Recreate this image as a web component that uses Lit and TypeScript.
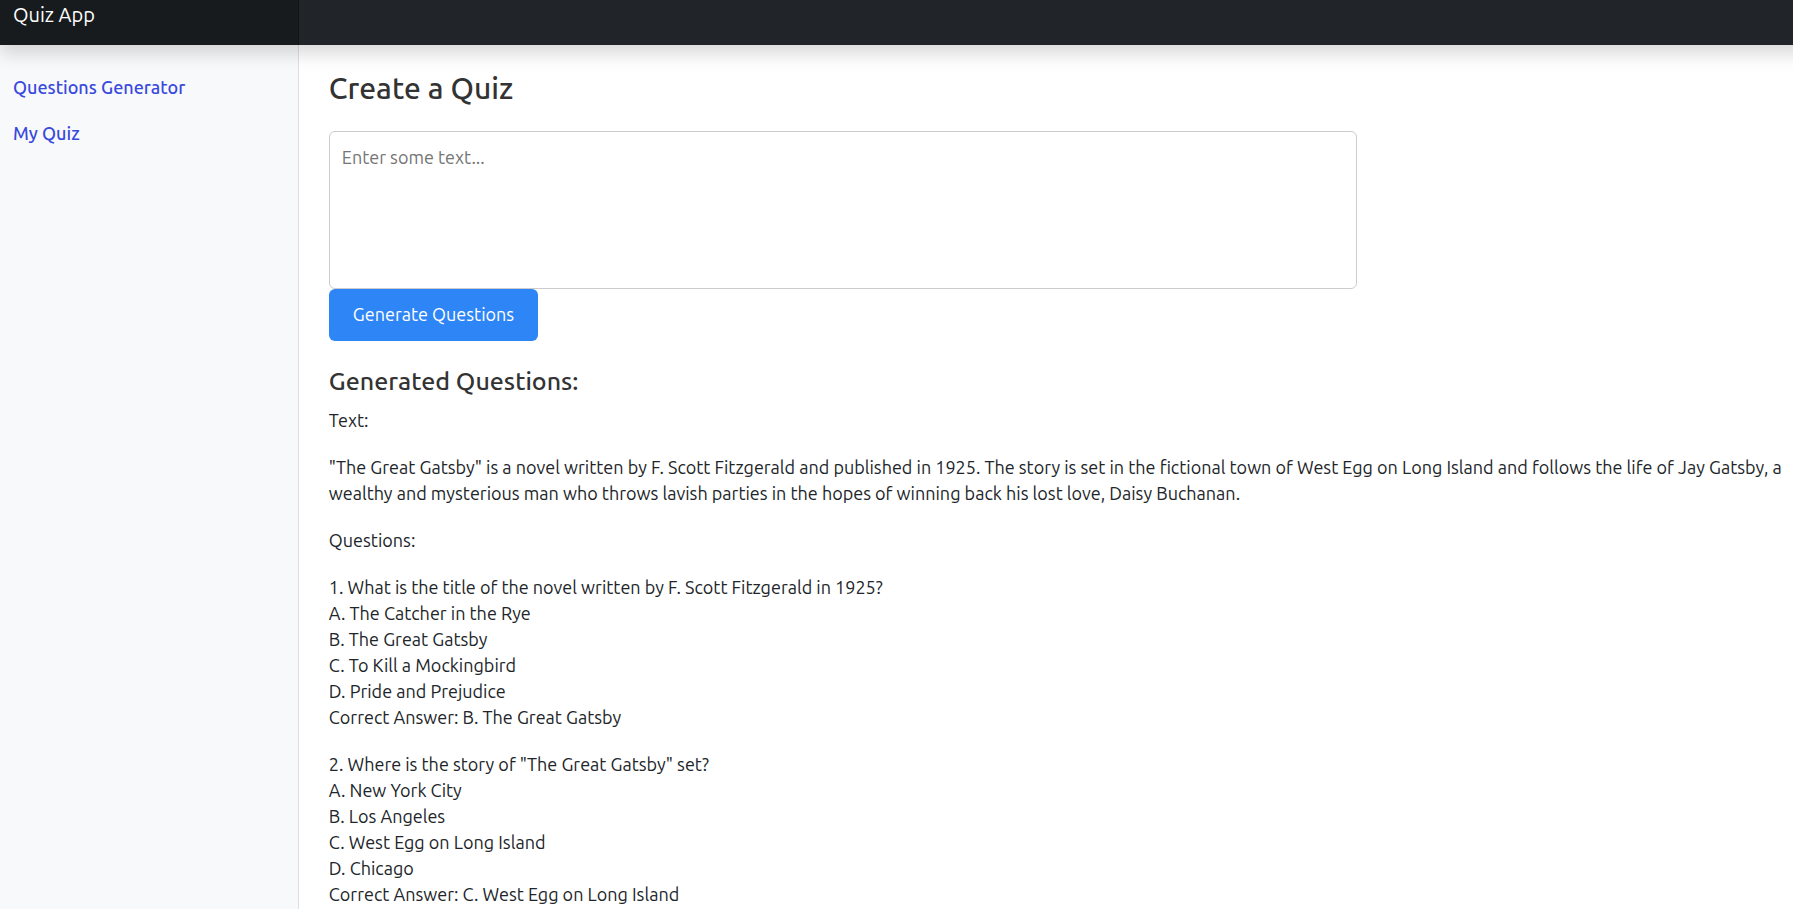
import { LitElement, html, css } from "lit";
import { customElement, property, state } from "lit/decorators.js";

interface Question {
  prompt: string;
  options: string[];
  answer: string;
}

const PASSAGE =
  '"The Great Gatsby" is a novel written by F. Scott Fitzgerald and published in 1925. The story is set in the fictional town of West Egg on Long Island and follows the life of Jay Gatsby, a wealthy and mysterious man who throws lavish parties in the hopes of winning back his lost love, Daisy Buchanan.';

const QUESTIONS: Question[] = [
  {
    prompt: "1. What is the title of the novel written by F. Scott Fitzgerald in 1925?",
    options: ["A. The Catcher in the Rye", "B. The Great Gatsby", "C. To Kill a Mockingbird", "D. Pride and Prejudice"],
    answer: "B. The Great Gatsby",
  },
  {
    prompt: '2. Where is the story of "The Great Gatsby" set?',
    options: ["A. New York City", "B. Los Angeles", "C. West Egg on Long Island", "D. Chicago"],
    answer: "C. West Egg on Long Island",
  },
];

@customElement("quiz-question")
export class QuizQuestion extends LitElement {
  static styles = css`
    :host {
      display: block;
    }
    .line {
      margin: 0;
    }
  `;

  @property({ attribute: false }) question!: Question;

  render() {
    const { prompt, options, answer } = this.question;
    return html`
      <p class="line">${prompt}</p>
      ${options.map((option) => html`<p class="line">${option}</p>`)}
      <p class="line">Correct Answer: ${answer}</p>
    `;
  }
}

@customElement("app-root")
export class AppRoot extends LitElement {
  static styles = css`
    :host {
      display: flex;
      flex-direction: column;
      min-height: 100vh;
      overflow-x: clip;
      background: #fff;
      color: #212529;
      font-family: Ubuntu, "Noto Sans", sans-serif;
      font-size: 18px;
      line-height: 26px;
    }
    * {
      box-sizing: border-box;
    }
    .topbar,
    .layout {
      display: grid;
      grid-template-columns: 2fr 10fr;
    }
    /* Runs past the right edge so its shadow does not fade out there. */
    .topbar {
      position: relative;
      z-index: 1;
      height: 45px;
      margin-right: -24px;
      padding-right: 24px;
      background: #212529;
      box-shadow: 0 9px 18px rgba(0, 0, 0, 0.15);
    }
    .brand {
      padding: 2px 13px;
      background: rgba(0, 0, 0, 0.25);
      box-shadow: inset -1px 0 0 rgba(0, 0, 0, 0.25);
      color: #fff;
      font-size: 20px;
      text-decoration: none;
    }
    .layout {
      flex: 1;
    }
    .sidebar {
      display: flex;
      flex-direction: column;
      gap: 20px;
      padding: 29px 13px;
      background: #f8f9fb;
      box-shadow: inset -1px 0 0 rgba(0, 0, 0, 0.1);
    }
    .link {
      color: #3849dd;
      font-weight: 500;
      text-decoration: none;
    }
    .content {
      display: flex;
      flex-direction: column;
      align-items: flex-start;
      min-width: 0;
      padding: 25px 8px 0 30px;
    }
    h1,
    h2,
    p {
      margin: 0;
    }
    h1,
    h2 {
      color: #333;
      font-weight: 550;
    }
    h1 {
      margin-bottom: 25px;
      font-size: 30px;
      line-height: 36px;
    }
    h2 {
      margin-top: 24px;
      font-size: 25px;
      line-height: 32px;
    }
    .source {
      display: block;
      width: calc(70% + 9px);
      height: 158px;
      padding: 12px;
      border: 1px solid #ccc;
      border-radius: 6px;
      background: #fff;
      color: inherit;
      font: inherit;
      resize: none;
    }
    .source::placeholder {
      color: #757575;
    }
    .generate {
      padding: 12px 24px 14px;
      border: 0;
      border-radius: 6px;
      background: #2e85f5;
      color: #fff;
      font: inherit;
      cursor: pointer;
    }
    .results {
      display: flex;
      flex-direction: column;
      gap: 21px;
      padding-top: 10px;
    }
  `;

  @state() private text = "";

  private onInput(event: Event) {
    this.text = (event.target as HTMLTextAreaElement).value;
  }

  render() {
    return html`
      <header class="topbar">
        <a class="brand" href="#">Quiz App</a>
      </header>
      <div class="layout">
        <nav class="sidebar" aria-label="Main">
          <a class="link" href="#generator">Questions Generator</a>
          <a class="link" href="#quiz">My Quiz</a>
        </nav>
        <main class="content">
          <h1>Create a Quiz</h1>
          <textarea
            class="source"
            aria-label="Source text"
            placeholder="Enter some text..."
            .value=${this.text}
            @input=${this.onInput}
          ></textarea>
          <button class="generate" type="button">Generate Questions</button>
          <h2>Generated Questions:</h2>
          <section class="results">
            <p>Text:</p>
            <p>${PASSAGE}</p>
            <p>Questions:</p>
            ${QUESTIONS.map((question) => html`<quiz-question .question=${question}></quiz-question>`)}
          </section>
        </main>
      </div>
    `;
  }
}
